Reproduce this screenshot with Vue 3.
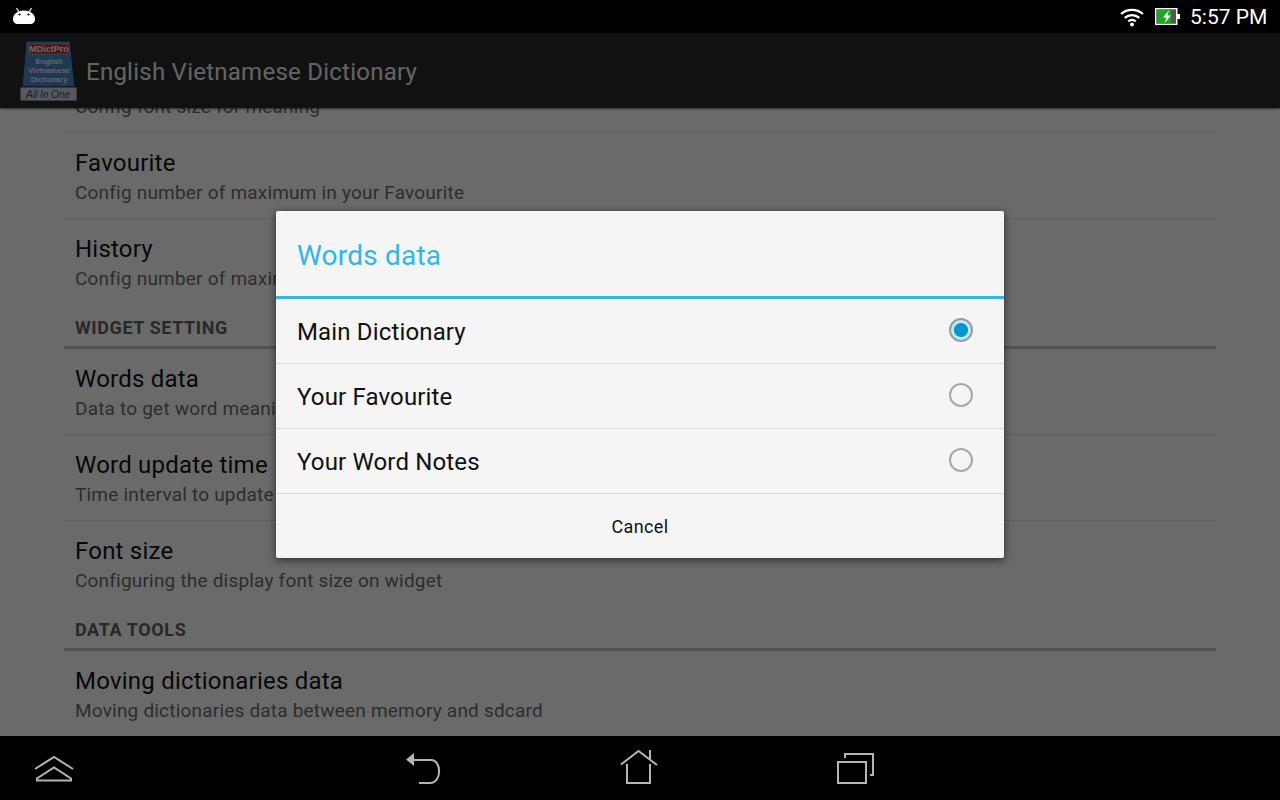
<template>
  <div class="screen">
    <div class="status-bar">
      <svg class="droid" width="24" height="18" viewBox="0 0 24 18">
        <path d="M4.500 1l2.500 4M19.500 1L17 5" stroke="#fff" stroke-width="1.200" fill="none" />
        <path d="M12 3.500c6.500 0 11 4 11 8.500 0 3.500-2 5-5 5H6c-3 0-5-1.500-5-5 0-4.500 4.500-8.500 11-8.500z" fill="#fff" />
        <circle cx="7.500" cy="7.500" r="1.100" fill="#000" />
        <circle cx="16.500" cy="7.500" r="1.100" fill="#000" />
      </svg>
      <div class="status-right">
        <svg width="24" height="20" viewBox="0 0 24 20" fill="none" stroke="#fff" stroke-width="2.200">
          <path d="M1 7c6.200-5.500 15.800-5.500 22 0" />
          <path d="M4.700 10.800c4.200-3.700 10.400-3.700 14.600 0" />
          <path d="M8.300 14.300c2.200-1.800 5.200-1.800 7.400 0" />
          <circle cx="12" cy="17.500" r="1.900" fill="#fff" stroke="none" />
        </svg>
        <svg class="battery" width="25" height="17" viewBox="0 0 25 17">
          <rect x="0.750" y="0.750" width="21" height="15.500" fill="#000" stroke="#fff" stroke-width="1.500" />
          <rect x="2" y="2" width="14" height="13" fill="#1fa51f" />
          <rect x="16" y="2" width="5" height="13" fill="#555" />
          <rect x="22" y="6" width="3" height="5" fill="#fff" />
          <path d="M14 2l-6 7.500h3.500L9.500 15l6.500-7.500h-3.500z" fill="#fff" />
        </svg>
        <span class="clock">5:57 PM</span>
      </div>
    </div>

    <div class="body">
      <header class="action-bar">
        <svg class="logo" width="60" height="62" viewBox="0 0 60 62">
          <path d="M7 1h44l5 46H3z" fill="#4a7fb8" stroke="#10243c" stroke-width="1" />
          <rect x="10" y="4" width="40" height="10" fill="#b02a2a" stroke="#ccc" stroke-width="0.500" />
          <text x="30" y="12" class="logo-brand" text-anchor="middle">MDictPro</text>
          <text x="30" y="24" class="logo-text" text-anchor="middle">English</text>
          <text x="30" y="33" class="logo-text" text-anchor="middle">Vietnamese</text>
          <text x="30" y="42" class="logo-text" text-anchor="middle">Dictionary</text>
          <rect x="1" y="47" width="57" height="14" rx="1" fill="#c8c8c8" stroke="#10243c" stroke-width="0.800" />
          <text x="29" y="58" class="logo-foot" text-anchor="middle">All In One</text>
        </svg>
        <span class="app-title">English Vietnamese Dictionary</span>
      </header>

      <div class="list-clip">
        <div class="list">
          <template v-for="item in items" :key="item.title">
            <div v-if="item.section" class="section">{{ item.title }}</div>
            <div v-else class="row" :class="{ 'no-line': item.noLine }">
              <div class="row-title">{{ item.title }}</div>
              <div class="row-sub">{{ item.sub }}</div>
            </div>
          </template>
        </div>
      </div>

      <div class="dim"></div>

      <div class="dialog">
        <div class="dialog-title">Words data</div>
        <div class="options">
          <div v-for="opt in options" :key="opt" class="option" @click="selected = opt">
            <span>{{ opt }}</span>
            <span class="radio" :class="{ on: selected === opt }"></span>
          </div>
        </div>
        <div class="cancel">Cancel</div>
      </div>
    </div>

    <nav class="nav-bar">
      <svg class="nav-up" width="42" height="28" viewBox="0 0 42 28" fill="none" stroke="#b4b4b4" stroke-width="2">
        <path d="M2 15L21 3l19 12" />
        <path d="M4 26.500V24.500L21 13.500l17 11v2z" />
      </svg>
      <svg class="nav-back" width="38" height="34" viewBox="0 0 38 34" fill="none" stroke="#b4b4b4" stroke-width="2">
        <path d="M9 2v13L1 8.500z" fill="#b4b4b4" stroke="none" />
        <path d="M9 9h17c11 0 11 23-1 23H14" />
      </svg>
      <svg class="nav-home" width="38" height="36" viewBox="0 0 38 36" fill="none" stroke="#b4b4b4" stroke-width="2">
        <path d="M1 15.500L18.500 2 37 16" />
        <path d="M30 1v9" />
        <path d="M7 15v19h23V15" />
      </svg>
      <svg class="nav-recent" width="38" height="32" viewBox="0 0 38 32" fill="none" stroke="#b4b4b4" stroke-width="2">
        <rect x="1" y="10" width="28" height="21" />
        <path d="M8 6V2h28v21h-3" />
      </svg>
    </nav>
  </div>
</template>

<script setup>
import { ref } from 'vue'

const items = [
  { title: 'Font size', sub: 'Config font size for meaning' },
  { title: 'Favourite', sub: 'Config number of maximum in your Favourite' },
  { title: 'History', sub: 'Config number of maximum in your History', noLine: true },
  { title: 'WIDGET SETTING', section: true },
  { title: 'Words data', sub: 'Data to get word meaning for widget' },
  { title: 'Word update time', sub: 'Time interval to update word on widget' },
  { title: 'Font size ', sub: 'Configuring the display font size on widget', noLine: true },
  { title: 'DATA TOOLS', section: true },
  { title: 'Moving dictionaries data', sub: 'Moving dictionaries data between memory and sdcard', noLine: true }
]

const options = ['Main Dictionary', 'Your Favourite', 'Your Word Notes']
const selected = ref('Main Dictionary')
</script>

<style>
html, body {
  margin: 0;
  background: #000;
}
</style>

<style scoped>
.screen {
  width: 1280px;
  height: 800px;
  display: flex;
  flex-direction: column;
  overflow: hidden;
  font-family: Roboto, sans-serif;
  background: #000;
}
.status-bar {
  height: 33px;
  flex: none;
  background: #000;
  display: flex;
  align-items: center;
  justify-content: space-between;
  padding: 0 13px 0 12px;
}
.droid {
  margin-top: -1px;
}
.status-right {
  display: flex;
  align-items: center;
}
.battery {
  margin-left: 11px;
}
.clock {
  margin-left: 10px;
  color: #fff;
  font-size: 21px;
  width: 77px;
  white-space: nowrap;
}
.body {
  flex: 1;
  position: relative;
  display: flex;
  flex-direction: column;
  min-height: 0;
}
.action-bar {
  height: 75px;
  flex: none;
  background: #282828;
  display: flex;
  align-items: center;
  padding-left: 19px;
  box-shadow: 0 1px 2px rgba(0, 0, 0, 0.6);
  position: relative;
  z-index: 1;
}
.logo {
  flex: none;
}
.app-title {
  margin: 3px 0 0 7px;
  font-size: 24px;
  color: #e4e4e4;
  letter-spacing: 0.25px;
}
.logo-brand {
  font: 700 9px "Liberation Sans", sans-serif;
  fill: #f2f2f2;
}
.logo-text {
  font: 700 7.500px "Liberation Sans", sans-serif;
  fill: #dfe8f4;
}
.logo-foot {
  font: italic 10px "Liberation Sans", sans-serif;
  fill: #274f9a;
}
.list-clip {
  flex: 1;
  overflow: hidden;
  background: #f2f2f2;
}
.list {
  margin: -61px 64px 0;
}
.row {
  height: 70px;
  padding: 15px 11px 0;
  border-bottom: 1px solid #d6d6d6;
  white-space: nowrap;
}
.row.no-line {
  border-bottom: 0;
}
.row-title {
  font-size: 24px;
  line-height: 30px;
  color: #111;
  letter-spacing: 0.22px;
}
.row-sub {
  font-size: 19px;
  line-height: 30px;
  color: #666;
  letter-spacing: 0.2px;
}
.section {
  height: 44px;
  margin-top: 1px;
  box-sizing: border-box;
  padding: 12px 11px 0;
  border-bottom: 3px solid #b8b8b8;
  font-size: 18px;
  font-weight: 700;
  line-height: 22px;
  color: #5c5c5c;
  letter-spacing: 0.6px;
}
.dim {
  position: absolute;
  inset: 0;
  z-index: 2;
  background: rgba(0, 0, 0, 0.56);
}
.dialog {
  position: absolute;
  z-index: 3;
  left: 276px;
  top: 178px;
  width: 728px;
  height: 347px;
  background: #f5f5f5;
  border-radius: 2px;
  box-shadow: 0 2px 8px rgba(0, 0, 0, 0.6);
  display: flex;
  flex-direction: column;
}
.dialog-title {
  height: 88px;
  flex: none;
  box-sizing: border-box;
  padding: 3px 0 0 21px;
  display: flex;
  align-items: center;
  font-size: 28px;
  color: #33b5e5;
  border-bottom: 3px solid #33b5e5;
  letter-spacing: 0.2px;
}
.option {
  height: 62px;
  border-bottom: 1px solid #d9d9d9;
  padding: 2px 31px 0 21px;
  display: flex;
  align-items: center;
  justify-content: space-between;
  font-size: 24px;
  color: #111;
  letter-spacing: 0.15px;
}
.radio {
  width: 20px;
  height: 20px;
  border: 2px solid #a8a8a8;
  border-radius: 50%;
  margin-top: -4px;
}
.radio.on {
  background: radial-gradient(circle, #0099cc 0 6.500px, #c6e6f2 7.500px);
  border-color: #8f9ea4;
}
.cancel {
  flex: 1;
  display: flex;
  align-items: center;
  justify-content: center;
  font-size: 18px;
  color: #111;
  letter-spacing: 0.35px;
}
.nav-bar {
  height: 64px;
  flex: none;
  background: #000;
  display: flex;
  align-items: center;
}
.nav-up {
  margin-left: 33px;
}
.nav-back {
  margin-left: 330px;
}
.nav-home {
  margin-left: 177px;
  margin-top: -2px;
}
.nav-recent {
  margin-left: 179px;
}
</style>
